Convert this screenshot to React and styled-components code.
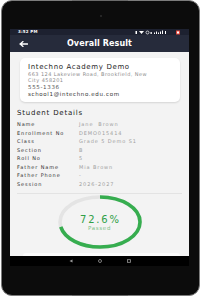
import { Fragment } from 'react';
import styled, { createGlobalStyle } from 'styled-components';

const GlobalStyle = createGlobalStyle`
  body {
    margin: 0;
    background: #ffffff;
    font-family: "DejaVu Sans", "Liberation Sans", sans-serif;
  }
`;

const Tablet = styled.div`
  position: relative;
  box-sizing: border-box;
  width: 199px;
  height: 296px;
  margin: 0 1px;
  background: #0c0c0c;
  border: 1px solid #7c7c7c;
  border-radius: 11px;
  display: flex;
  flex-direction: column;

  &::before,
  &::after {
    content: '';
    position: absolute;
    left: 70px;
    width: 56px;
    height: 1px;
    background: #6a6a6a;
  }
  &::before { top: -1px; }
  &::after { bottom: -1px; }
`;

const TopBezel = styled.div`
  box-sizing: border-box;
  height: 28px;
  padding-top: 14px;
  display: flex;
  justify-content: center;
`;

const Camera = styled.span`
  width: 2px;
  height: 2px;
  border-radius: 50%;
  background: #2e2e2e;
`;

const Screen = styled.div`
  width: 179px;
  height: 237px;
  margin-left: 8px;
  display: flex;
  flex-direction: column;
  background: #f3f3f3;
`;

const StatusBar = styled.div`
  height: 6px;
  padding: 0 8px;
  background: #1d2130;
  display: flex;
  align-items: center;
  justify-content: space-between;
`;

const Time = styled.span`
  font-size: 4px;
  line-height: 6px;
  font-weight: 700;
  color: #ffffff;
  letter-spacing: 0.2px;
`;

const Header = styled.div`
  height: 17px;
  padding: 0 9px;
  background: #262b3b;
  display: grid;
  grid-template-columns: 1fr auto 1fr;
  align-items: center;
`;

const Title = styled.h1`
  margin: 0;
  font-size: 8px;
  line-height: 10px;
  font-weight: 700;
  color: #ffffff;
  letter-spacing: 0.1px;
`;

const Content = styled.main`
  flex: 1;
  padding: 6px 7px 0;
  display: flex;
  flex-direction: column;
`;

const Card = styled.section`
  margin: 0 2px 0 3px;
  padding: 5px 8px;
  background: #ffffff;
  border-radius: 5px;
  box-shadow: 0 1px 2px rgba(0, 0, 0, 0.13);
`;

const SchoolName = styled.div`
  font-size: 7px;
  line-height: 8px;
  color: #1e1e1e;
  letter-spacing: 0.64px;
`;

const Address = styled.div`
  max-width: 126px;
  font-size: 5px;
  line-height: 6px;
  color: #8c8c8c;
  letter-spacing: 0.45px;
`;

const Contact = styled.div`
  margin-top: 1px;
  font-size: 5.5px;
  line-height: 6px;
  color: ${(p) => p.$color};
  letter-spacing: 0.65px;
`;

const SectionTitle = styled.h2`
  margin: 6.6px 0 0;
  font-size: 7px;
  line-height: 8px;
  font-weight: 400;
  color: #1a1a1a;
  letter-spacing: 0.8px;
`;

const Details = styled.dl`
  margin: 3.1px 0 0;
  display: grid;
  grid-template-columns: 62px 1fr;
  grid-auto-rows: 8.57px;
  align-items: center;
  font-size: 5px;
  line-height: 6px;
  letter-spacing: 0.9px;
`;

const Label = styled.dt`
  color: #303030;
  white-space: nowrap;
`;

const Value = styled.dd`
  margin: 0;
  color: #a0a0a0;
  white-space: pre;
`;

const Divider = styled.hr`
  margin: 5px 0 0;
  border: 0;
  height: 1px;
  background: #e3e3e3;
`;

const Ring = styled.div`
  align-self: center;
  margin-top: 1px;
  width: 84px;
  height: 54px;
  display: grid;

  & > * {
    grid-area: 1 / 1;
  }
`;

const RingLabel = styled.div`
  display: flex;
  flex-direction: column;
  align-items: center;
  justify-content: center;
  padding-top: 1px;
`;

const Percent = styled.span`
  font-size: 10px;
  line-height: 11px;
  color: #2f9f47;
  letter-spacing: 1.8px;
  margin-right: -1.8px;
`;

const Passed = styled.span`
  margin-top: 0.5px;
  font-size: 5.5px;
  line-height: 6px;
  color: #7fc28c;
  letter-spacing: 0.7px;
`;

const Sheet = styled.div`
  margin: auto 2px 0 6px;
  height: 3px;
  background: #fbfbfb;
  border-radius: 6px 6px 0 0;
`;

const NavBar = styled.nav`
  height: 10px;
  background: #000000;
  display: flex;
  align-items: center;
  justify-content: center;
  gap: 25px;
`;

const details = [
  ['Name', 'Jane  Brown'],
  ['Enrollment No', 'DEMO015414'],
  ['Class', 'Grade 5 Demo S1'],
  ['Section', 'B'],
  ['Roll No', '5'],
  ['Father Name', 'Mia Brown'],
  ['Father Phone', '-'],
  ['Session', '2026-2027'],
];

function StatusIcons() {
  return (
    <svg width="46" height="5" viewBox="0 0 46 5">
      <rect x="0.5" y="1" width="1.5" height="3" fill="#fff" />
      <path d="M4 1 H9 L6.5 4 Z" fill="#fff" />
      <circle cx="12.5" cy="2.5" r="1.5" fill="none" stroke="#fff" strokeWidth="0.7" />
      <rect x="15.5" y="2" width="1.3" height="2" fill="#fff" />
      <rect x="19" y="2.5" width="1" height="1.5" fill="#fff" />
      <rect x="21" y="1.5" width="1" height="2.5" fill="#fff" />
      <rect x="23" y="2.5" width="1" height="1.5" fill="#fff" />
      <rect x="25" y="1.5" width="1" height="2.5" fill="#fff" />
      <rect x="27" y="0.5" width="1" height="3.5" fill="#fff" />
      <rect x="30" y="1" width="1" height="3" fill="#fff" />
      <rect x="41" y="0.5" width="4" height="4" fill="#e2483c" />
      <rect x="42" y="1.5" width="2" height="2" fill="#fff" />
    </svg>
  );
}

function BackArrow() {
  return (
    <svg width="9" height="6" viewBox="0 0 9 6">
      <path
        d="M8.5 3 H1 M4 0.6 L1.2 3 L4 5.4"
        fill="none"
        stroke="#fff"
        strokeWidth="1.3"
        strokeLinecap="round"
        strokeLinejoin="round"
      />
    </svg>
  );
}

function ResultRing({ value }) {
  return (
    <svg width="84" height="54" viewBox="0 0 84 54">
      <ellipse cx="42" cy="27" rx="40" ry="25" fill="none" stroke="#e4e4e4" strokeWidth="3.6" />
      <path
        d="M42 2 A40 25 0 1 1 42 52 A40 25 0 1 1 42 2"
        fill="none"
        stroke="#36ad4f"
        strokeWidth="3.6"
        pathLength="100"
        strokeDasharray={`${value} 100`}
      />
    </svg>
  );
}

function NavIcons() {
  return (
    <>
      <svg width="4" height="4" viewBox="0 0 4 4">
        <path d="M3.5 0.5 V3.5 L0.5 2 Z" fill="#9a9a9a" />
      </svg>
      <svg width="4" height="4" viewBox="0 0 4 4">
        <circle cx="2" cy="2" r="1.5" fill="none" stroke="#9a9a9a" strokeWidth="0.8" />
      </svg>
      <svg width="4" height="4" viewBox="0 0 4 4">
        <rect x="0.5" y="0.7" width="3" height="2.6" fill="none" stroke="#9a9a9a" strokeWidth="0.8" />
      </svg>
    </>
  );
}

export default function App() {
  return (
    <>
      <GlobalStyle />
      <Tablet>
        <TopBezel>
          <Camera />
        </TopBezel>
        <Screen>
          <StatusBar>
            <Time>3:52 PM</Time>
            <StatusIcons />
          </StatusBar>
          <Header>
            <BackArrow />
            <Title>Overall Result</Title>
            <span />
          </Header>
          <Content>
            <Card>
              <SchoolName>Intechno Academy Demo</SchoolName>
              <Address>663 124 Lakeview Road, Brookfield, New City 458201</Address>
              <Contact $color="#555555">555-1336</Contact>
              <Contact $color="#333333">school1@intechno.edu.com</Contact>
            </Card>
            <SectionTitle>Student Details</SectionTitle>
            <Details>
              {details.map(([label, value]) => (
                <Fragment key={label}>
                  <Label>{label}</Label>
                  <Value>{value}</Value>
                </Fragment>
              ))}
            </Details>
            <Divider />
            <Ring>
              <ResultRing value={72.6} />
              <RingLabel>
                <Percent>72.6%</Percent>
                <Passed>Passed</Passed>
              </RingLabel>
            </Ring>
            <Sheet />
          </Content>
          <NavBar>
            <NavIcons />
          </NavBar>
        </Screen>
      </Tablet>
    </>
  );
}
